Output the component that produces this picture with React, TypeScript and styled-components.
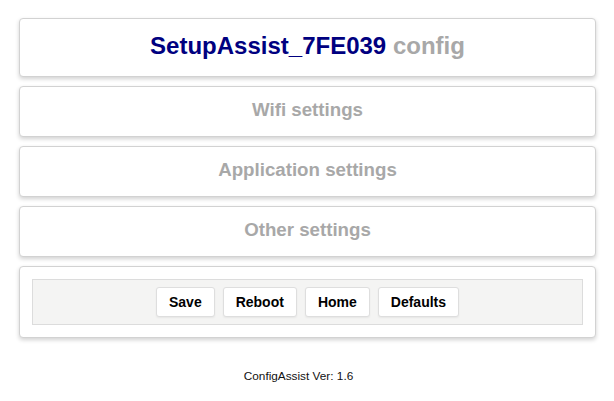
import React from "react";
import styled, { createGlobalStyle } from "styled-components";

const Global = createGlobalStyle`
  html, body { margin: 0; padding: 0; background: #fff; }
  body { font-family: "Liberation Sans", Arial, sans-serif; }
`;

const Page = styled.div`
  padding: 18px 18px 0 19px;
  display: flex;
  flex-direction: column;
  gap: 9px;
`;

const Card = styled.div<{ $h: number }>`
  box-sizing: border-box;
  height: ${(p) => p.$h}px;
  background: #fff;
  border: 1px solid #d2d2d2;
  border-radius: 4px;
  box-shadow: 0 2px 4px rgba(0, 0, 0, 0.18);
  display: flex;
  align-items: center;
  justify-content: center;
`;

const Title = styled.h1`
  margin: -4px 0 0 0;
  font-size: 24px;
  font-weight: bold;
  color: #000080;
`;

const Muted = styled.span`
  color: #a8a8a8;
`;

const Section = styled.div`
  font-size: 18.7px;
  font-weight: bold;
  color: #a8a8a8;
  margin-top: -3px;
`;

const ButtonCard = styled(Card)`
  padding: 12px 12px;
  align-items: stretch;
`;

const Bar = styled.div`
  flex: 1;
  background: #f4f4f3;
  border: 1px solid #dcdcdc;
  display: flex;
  align-items: center;
  justify-content: center;
  gap: 8px;
`;

const Btn = styled.button`
  height: 30px;
  padding: 0 12px;
  background: #fff;
  border: 1px solid #dedede;
  border-radius: 3px;
  font-family: "Liberation Sans", Arial, sans-serif;
  font-size: 14px;
  font-weight: bold;
  color: #000;
  box-shadow: 0 1px 2px rgba(0, 0, 0, 0.06);
`;

const Footer = styled.div`
  text-align: center;
  font-size: 11.8px;
  color: #111;
  margin-top: 22px;
  padding-right: 18px;
`;

export default function App() {
  return (
    <>
      <Global />
      <Page>
        <Card $h={59}>
          <Title>
            SetupAssist_7FE039 <Muted>config</Muted>
          </Title>
        </Card>
        <Card $h={51}>
          <Section>Wifi settings</Section>
        </Card>
        <Card $h={51}>
          <Section>Application settings</Section>
        </Card>
        <Card $h={51}>
          <Section>Other settings</Section>
        </Card>
        <ButtonCard $h={72}>
          <Bar>
            <Btn>Save</Btn>
            <Btn>Reboot</Btn>
            <Btn>Home</Btn>
            <Btn>Defaults</Btn>
          </Bar>
        </ButtonCard>
        <Footer>ConfigAssist Ver: 1.6</Footer>
      </Page>
    </>
  );
}
